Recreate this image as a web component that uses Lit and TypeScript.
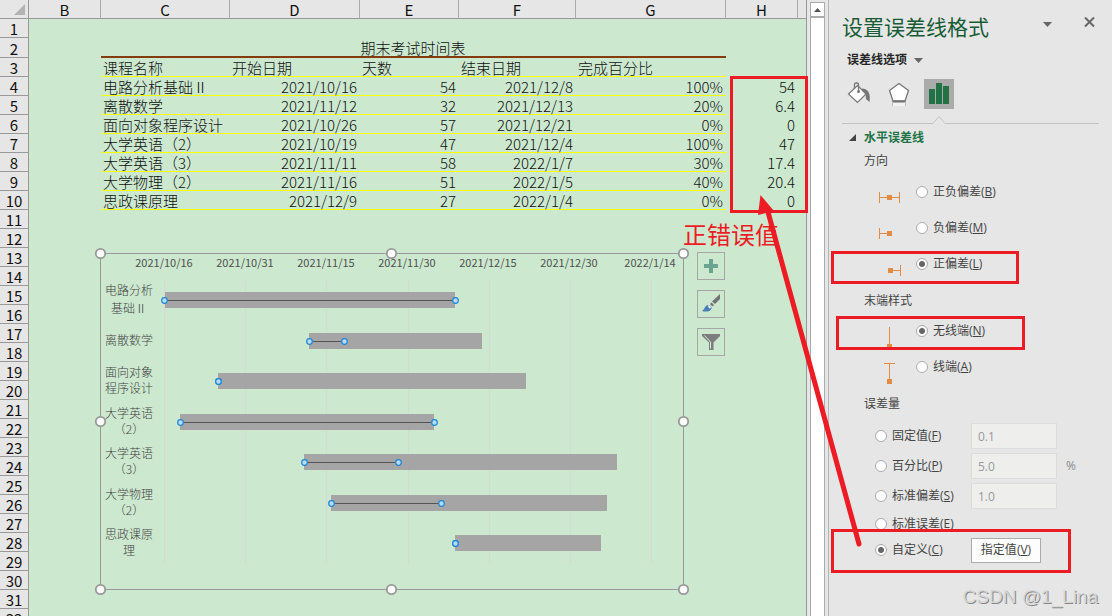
import { LitElement, html, svg, css } from "lit";
import { customElement } from "lit/decorators.js";
import { classMap } from "lit/directives/class-map.js";

type Course = [string, string, string, string, string, string];

const COURSES: Course[] = [
  ["电路分析基础Ⅱ", "2021/10/16", "54", "2021/12/8", "100%", "54"],
  ["离散数学", "2021/11/12", "32", "2021/12/13", "20%", "6.4"],
  ["面向对象程序设计", "2021/10/26", "57", "2021/12/21", "0%", "0"],
  ["大学英语（2）", "2021/10/19", "47", "2021/12/4", "100%", "47"],
  ["大学英语（3）", "2021/11/11", "58", "2022/1/7", "30%", "17.4"],
  ["大学物理（2）", "2021/11/16", "51", "2022/1/5", "40%", "20.4"],
  ["思政课原理", "2021/12/9", "27", "2022/1/4", "0%", "0"],
];

@customElement("excel-sheet")
export class ExcelSheet extends LitElement {
  static styles = css`
    :host { display: block; background: #cce8cf; border-right: 1px solid #999; }
    table { width: 100%; table-layout: fixed; border-collapse: separate; border-spacing: 0; }
    .c-head { width: 29px; } .c-b { width: 72px; } .c-c { width: 129px; } .c-d { width: 130px; }
    .c-e { width: 99px; } .c-f { width: 117px; } .c-g { width: 150px; } .c-h { width: 72px; }
    tr { height: 19px; }
    .tall { height: 20px; }
    th, td { box-sizing: border-box; height: 19px; padding: 0; line-height: 16px; white-space: nowrap; }
    .tall th, .tall td { height: 20px; }
    th { background: #e6e6e6; color: #111; font-weight: 400; font-size: 15px; border-bottom: 1px solid #999; text-align: center; padding-top: 2px; }
    thead th { border-right: 1px solid #aaa; }
    thead th:last-child { border-right: 0; }
    thead th:first-child, tbody th { border-right: 1px solid #999; }
    .corner svg { display: block; margin-left: 14px; }
    td { font-size: 15px; color: #111; font-weight: 300; padding: 2px 3px 0 2px; border-bottom: 1px solid transparent; }
    .num { text-align: right; }
    .title { text-align: center; border-bottom: 2px solid #843c0c; }
    .line { border-bottom: 1px solid #ff0; }
  `;

  private cells(n: number) {
    if (n === 2) return html`<td></td><td class="title" colspan="5">期末考试时间表</td><td></td><td></td>`;
    if (n === 3) {
      return html`<td></td>${["课程名称", "开始日期", "天数", "结束日期", "完成百分比"].map(
        (t) => html`<td class="line">${t}</td>`
      )}<td></td><td></td>`;
    }
    if (n >= 4 && n <= 10) {
      return html`<td></td>${COURSES[n - 4].map((t, i) => html`<td class=${classMap({ num: i > 0, line: i < 5 })}>${t}</td>`)}<td></td>`;
    }
    return html`<td colspan="8"></td>`;
  }

  render() {
    return html`<table>
      <colgroup>
        <col class="c-head" /><col class="c-b" /><col class="c-c" /><col class="c-d" /><col class="c-e" />
        <col class="c-f" /><col class="c-g" /><col class="c-h" /><col />
      </colgroup>
      <thead>
        <tr>
          <th class="corner"><svg width="12" height="12"><path d="M11 0V11H0Z" fill="#b3b3b3" /></svg></th>
          ${["B", "C", "D", "E", "F", "G", "H", ""].map((l) => html`<th>${l}</th>`)}
        </tr>
      </thead>
      <tbody>
        ${Array.from({ length: 32 }, (_, i) => i + 1).map(
          (n) => html`<tr class=${classMap({ tall: n === 2 })}><th>${n}</th>${this.cells(n)}</tr>`
        )}
      </tbody>
    </table>`;
  }
}

/* Chart coordinates: the frame runs from (6,6) to (589,342) inside the drawing. */
const TICKS = ["2021/10/16", "2021/10/31", "2021/11/15", "2021/11/30", "2021/12/15", "2021/12/30", "2022/1/14"];
const BARS = [
  { lines: ["电路分析", "基础Ⅱ"], gap: 18, x: 0, w: 290, err: 291 },
  { lines: ["离散数学"], gap: 16, x: 145, w: 173, err: 35 },
  { lines: ["面向对象", "程序设计"], gap: 16, x: 54, w: 308, err: 0 },
  { lines: ["大学英语", "（2）"], gap: 16, x: 16, w: 254, err: 254 },
  { lines: ["大学英语", "（3）"], gap: 16, x: 140, w: 313, err: 94 },
  { lines: ["大学物理", "（2）"], gap: 16, x: 167, w: 276, err: 110 },
  { lines: ["思政课原", "理"], gap: 16, x: 291, w: 146, err: 0 },
];

@customElement("gantt-chart")
export class GanttChart extends LitElement {
  static styles = css`
    :host { display: flex; align-items: flex-start; gap: 8px; }
    .plot { display: block; }
    .date { font: 11px "Noto Sans CJK SC", sans-serif; fill: #505050; text-anchor: middle; }
    .cat { font: 12px "Noto Sans CJK SC", sans-serif; font-weight: 300; fill: #444; text-anchor: middle; }
    .tools { display: flex; flex-direction: column; gap: 10px; padding-top: 5px; }
    button { display: grid; place-items: center; width: 28px; height: 28px; padding: 0; background: none; border: 1px solid #a6a6a6; }
  `;

  render() {
    const knobs = [[6, 6], [297, 6], [589, 6], [6, 174], [589, 174], [6, 342], [297, 342], [589, 342]];
    return html`
      <svg class="plot" width="595" height="350" role="img" aria-label="期末考试时间表">
        <rect x="6.5" y="6.5" width="583" height="336" fill="none" stroke="#999" />
        ${TICKS.map((_, i) => svg`<path d=${`M${70.5 + Math.round(i * 81.2)} 33V317`} stroke="#d6d9d8" />`)}
        ${TICKS.map((t, i) => svg`<text class="date" x=${70 + Math.round(i * 81)} y="20">${t}</text>`)}
        ${BARS.map((b, i) => {
          const y = 53 + Math.round(i * 40.5);
          const mid = b.lines.length > 1 ? y + 4 - b.gap / 2 : y + 4;
          return svg`
            <rect x=${70 + b.x + (i === 0 ? 1 : 0)} y=${y - 8} width=${b.w} height="16" fill="#a5a5a5" />
            ${b.err ? svg`<path d=${`M${70 + b.x} ${y + 0.5}h${b.err}`} stroke="#555" />` : null}
            ${[0, b.err].map((e) => svg`<circle cx=${70 + b.x + e + 0.5} cy=${y + 0.5} r="2.8" fill="#b4dcf5" stroke="#1f86d6" stroke-width="1.2" />`)}
            ${b.lines.map((l, k) => svg`<text class="cat" x="35" y=${mid + k * b.gap}>${l}</text>`)}`;
        })}
        ${knobs.map(([x, y]) => svg`<circle cx=${x + 0.5} cy=${y + 0.5} r="4.7" fill="#fff" stroke="#999" stroke-width="1.8" />`)}
      </svg>
      <div class="tools">
        <button aria-label="图表元素"><svg width="14" height="14"><path d="M5 0h4v5h5v4H9v5H5V9H0V5h5Z" fill="#6aa592" /></svg></button>
        <button aria-label="图表样式">
          <svg width="20" height="20">
            <path d="M19 0V5L14 10 11 7.500Z" fill="#737373" />
            <path d="M10.500 8.500L13 11 11.500 12.500 9 10Z" fill="#737373" />
            <path d="M1 17C4 15 3.500 13 5.500 11.500C8 10 11 12 10.500 14.500C9.500 18 4 18 1 17Z" fill="#4a7fb8" />
            <path d="M7 11.500c1.500-.6 3 .8 2.800 2.300L8.300 14.500 7.500 13Z" fill="#fff" />
          </svg>
        </button>
        <button aria-label="图表筛选器">
          <svg width="18" height="18"><path d="M0 1H18V3L11.500 9.500V17H7V9.500L0 3Z" fill="#7d7d7d" /><path d="M2.500 2.500L8.500 9V15.500" fill="none" stroke="#d9ead9" /></svg>
        </button>
      </div>`;
  }
}

@customElement("format-pane")
export class FormatPane extends LitElement {
  static styles = css`
    :host { display: block; box-sizing: border-box; background: #e6e6e6; border-left: 1px solid #b5b5b5; color: #444; font: 12px/16px "Open Sans", "Noto Sans CJK SC", sans-serif; padding: 12px 13px 0; }
    h2, h3, h4 { margin: 0; font-size: 12px; font-weight: 400; }
    button { font: inherit; color: inherit; padding: 0; border: 0; background: none; }
    .top { display: flex; align-items: flex-start; height: 36px; }
    .top h2 { flex: 1; font-size: 21px; line-height: 28px; color: #175c36; font-family: "Noto Sans CJK SC", sans-serif; }
    .top button { height: 22px; }
    .top .x { margin: 0 4px 0 32px; }
    .options { display: flex; align-items: center; gap: 7px; height: 24px; padding-left: 5px; font-weight: 700; color: #262626; }
    .tabs { display: flex; align-items: flex-start; gap: 10px; height: 35px; padding: 7px 0 0 2px; }
    .tabs button { display: grid; place-items: center; width: 30px; height: 30px; }
    .tabs .on { background: #ababab; }
    .rule { display: block; width: 100%; height: 10px; }
    .group { display: flex; align-items: center; gap: 7px; height: 27px; padding-left: 7px; color: #217346; }
    .group h3 { font-weight: 700; }
    .sub { height: 20px; line-height: 20px; padding-left: 22px; }
    .row { display: flex; align-items: flex-start; height: 36px; padding-left: 34px; }
    .row svg { margin: 3px 15px 0 0; overflow: visible; }
    label { display: flex; align-items: center; gap: 5px; height: 18px; }
    input[type="radio"] { appearance: none; width: 12px; height: 12px; margin: 0; border: 1px solid #ababab; border-radius: 50%; background: #fff; }
    input[type="radio"]:checked { background: radial-gradient(circle, #666 0 2.500px, #fff 3.500px); }
    .directions { padding-top: 12px; }
    .directions.ends { padding-top: 11px; }
    .amounts { padding-top: 7px; }
    .amount { display: grid; grid-template-columns: 96px 1fr; align-items: center; height: 30px; padding-left: 33px; }
    .amount.short { height: 26px; }
    .field { display: flex; align-items: center; gap: 9px; color: #8a8a8a; }
    input[type="text"] { box-sizing: border-box; width: 86px; height: 26px; padding: 0 6px; border: 1px solid #dcdcdc; background: #eeeeec; color: #999; font: inherit; }
    .specify { width: 70px; height: 25px; background: #fdfdfd; border: 1px solid #ababab; }
  `;

  private key(name: string, key: string) {
    return html`<span>${name}(<u>${key}</u>)</span>`;
  }

  private choice(group: string, name: string, key: string, on = false) {
    return html`<label><input type="radio" name=${group} ?checked=${on} />${this.key(name, key)}</label>`;
  }

  private mark(d: string, x: number, y: number) {
    return html`<svg width="25" height="24" aria-hidden="true"><path d=${d} fill="none" stroke="#e38b43" /><rect x=${x} y=${y} width="5" height="5" fill="#e38b43" /></svg>`;
  }

  private amount(name: string, key: string, value: string, unit = "") {
    return html`<div class="amount">${this.choice("amount", name, key)}
      <div class="field"><input type="text" aria-label=${name} disabled value=${value} />${unit}</div></div>`;
  }

  render() {
    return html`
      <div class="top">
        <h2>设置误差线格式</h2>
        <button aria-label="窗格选项"><svg width="9" height="5"><path d="M0 0H9L4.500 5Z" fill="#666" /></svg></button>
        <button class="x" aria-label="关闭"><svg width="11" height="10"><path d="M1 .5L10 9.500M10 .5L1 9.500" stroke="#666" stroke-width="2" /></svg></button>
      </div>
      <button class="options">误差线选项<svg width="9" height="5"><path d="M0 0H9L4.500 5Z" fill="#666" /></svg></button>
      <div class="tabs">
        <button aria-label="填充与线条">
          <svg width="24" height="24">
            <path d="M15 6.500C21 7 24 11 22.500 20L19 17C19 12 18 10 15 9Z" fill="#777" />
            <path d="M10.500 3.500L19 12 10.500 20.500 1.500 12Z" fill="#fff" stroke="#777" stroke-width="1.200" />
            <path d="M7.500 7V2.500Q7.500 1 9 1H10Q11.500 1 11.500 2.500V9" fill="none" stroke="#777" stroke-width="1.300" /><circle cx="11.500" cy="9.500" r="1.500" fill="#777" />
          </svg>
        </button>
        <button aria-label="效果">
          <svg width="22" height="26"><path d="M11 2.500L20.500 9.500 17 20H5L1.500 9.500Z" fill="#fff" stroke="#777" stroke-width="1.300" /><path d="M4.500 20.500H17.500" stroke="#777" stroke-width="2" /><path d="M5 22H17L18 25H4Z" fill="#f3f3f3" /><path d="M4.500 22V25M17.500 22V25" stroke="#bbb" /></svg>
        </button>
        <button class="on" aria-label="误差线选项"><svg width="20" height="22"><path d="M0 6H6V21H0ZM7 0H13V21H7ZM14 3H20V21H14Z" fill="#217346" /></svg></button>
      </div>
      <svg class="rule" viewBox="0 0 257 10"><path d="M0 9.500H91L97 2.500 103 9.500H257" fill="none" stroke="#c3c3c3" /></svg>
      <div class="group"><svg width="8" height="7"><path d="M7 0V7H0Z" fill="#444" /></svg><h3>水平误差线</h3></div>
      <h4 class="sub">方向</h4>
      <div class="directions">
        <div class="row">${this.mark("M3.500 6V17M3.500 11.500H23.500M23.500 6V17", 11, 9)}${this.choice("dir", "正负偏差", "B")}</div>
        <div class="row">${this.mark("M3.500 6V17M3.500 11.500H14", 11, 9)}${this.choice("dir", "负偏差", "M")}</div>
        <div class="row">${this.mark("M13 12.500H24.500M24.500 7V18", 12, 10)}${this.choice("dir", "正偏差", "L", true)}</div>
      </div>
      <h4 class="sub">末端样式</h4>
      <div class="directions ends">
        <div class="row">${this.mark("M13.500 2V22", 11, 19)}${this.choice("end", "无线端", "N", true)}</div>
        <div class="row">${this.mark("M8 2.500H19M13.500 2V20", 11, 18)}${this.choice("end", "线端", "A")}</div>
      </div>
      <h4 class="sub">误差量</h4>
      <div class="amounts">
        ${this.amount("固定值", "F", "0.1")} ${this.amount("百分比", "P", "5.0", "%")} ${this.amount("标准偏差", "S", "1.0")}
        <div class="amount short">${this.choice("amount", "标准误差", "E")}</div>
        <div class="amount short">${this.choice("amount", "自定义", "C", true)}<button class="specify">${this.key("指定值", "V")}</button></div>
      </div>`;
  }
}

@customElement("app-root")
export class AppRoot extends LitElement {
  static styles = css`
    :host { display: grid; grid-template-columns: 1fr 21px 284px; position: relative; height: 100vh; overflow: hidden; background: #e6e6e6; font-family: "Noto Sans CJK SC", sans-serif; }
    .sheet { position: relative; overflow: hidden; display: grid; min-width: 0; }
    gantt-chart { position: absolute; left: 94px; top: 247px; }
    .scroll { display: flex; flex-direction: column; align-items: center; box-sizing: border-box; margin: 2px 3px 0; background: #fff; border: solid #ababab; border-width: 0 1px; }
    .scroll button { display: grid; place-items: center; align-self: stretch; height: 16px; padding: 0; border: solid #ababab; border-width: 1px 0 2px; background: #fff; }
    .notes { position: absolute; left: 0; top: 0; pointer-events: none; }
    .note { font: 24px "Noto Sans CJK SC", sans-serif; fill: #ed1c24; }
    .mark { position: absolute; right: 14px; bottom: 5px; font: 19px/28px "Liberation Sans", sans-serif; color: #d6d6d6; text-shadow: 1px 1px 0 #888; }
  `;

  render() {
    return html`
      <main class="sheet"><excel-sheet></excel-sheet><gantt-chart></gantt-chart></main>
      <div class="scroll"><button aria-label="向上滚动"><svg width="7" height="4"><path d="M0 4L3.500 0 7 4Z" fill="#555" /></svg></button></div>
      <format-pane></format-pane>
      <svg class="notes" width="1112" height="616">
        <text class="note" x="683" y="244">正错误值</text>
        <g fill="none" stroke="#ed1c24" stroke-width="3">
          <rect x="731.500" y="77.500" width="75" height="134" />
          <rect x="832.500" y="252.500" width="185" height="30" />
          <rect x="837.500" y="317.500" width="186" height="31" />
          <rect x="832.500" y="530.500" width="237" height="41" />
        </g>
        <path d="M859 544L768 212" stroke="#ed1c24" stroke-width="5" stroke-linecap="round" />
        <path d="M760.500 195L774 211 758 215Z" fill="#ed1c24" />
      </svg>
      <div class="mark">CSDN @1_Lina</div>`;
  }
}
